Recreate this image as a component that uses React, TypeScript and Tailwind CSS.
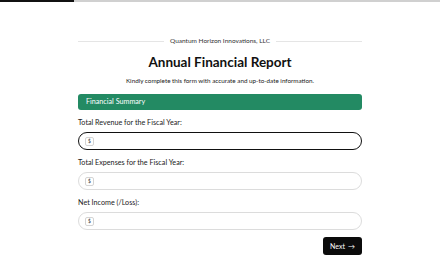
import React from "react";

function Field({ label, focused }: { label: string; focused?: boolean }) {
  return (
    <div className="flex flex-col">
      <label className="text-[7.2px] leading-[10px] text-[#222] mb-[4px]">{label}</label>
      <div
        className={
          "h-[18px] rounded-full flex items-center pl-[6px] bg-white " +
          (focused ? "border-[1.5px] border-[#111]" : "border border-[#dcdcdc]")
        }
      >
        <span className="w-[9px] h-[9px] border border-[#d4d4d4] rounded-[2px] text-[5px] leading-none flex items-center justify-center text-[#333]">
          $
        </span>
      </div>
    </div>
  );
}

export default function App() {
  return (
    <div className="w-[440px] h-[275px] bg-white overflow-hidden" style={{ fontFamily: "Lato, 'Noto Sans', sans-serif" }}>
      <div className="h-[2px] bg-[#d0d0d0] flex">
        <div className="w-[74px] bg-[#111]" />
      </div>
      <div className="w-[284px] mx-auto pt-[34px] flex flex-col">
        <div className="flex items-center gap-[6px]">
          <div className="flex-1 h-px bg-[#e5e5e5]" />
          <span className="text-[6.5px] leading-[10px] text-[#333]">Quantum Horizon Innovations, LLC</span>
          <div className="flex-1 h-px bg-[#e5e5e5]" />
        </div>
        <h1 className="text-center text-[13.5px] leading-[18px] font-bold text-[#111] mt-[7px]">Annual Financial Report</h1>
        <p className="text-center text-[6.3px] leading-[10px] text-[#222] mt-[5px]">
          Kindly complete this form with accurate and up-to-date information.
        </p>
        <div className="mt-[8px] h-[16px] rounded-[3px] bg-[#238a63] flex items-center px-[8px] text-[7.2px] text-white">
          Financial Summary
        </div>
        <div className="mt-[8px] flex flex-col gap-[8px]">
          <Field label="Total Revenue for the Fiscal Year:" focused />
          <Field label="Total Expenses for the Fiscal Year:" />
          <Field label="Net Income (/Loss):" />
        </div>
        <div className="flex justify-end mt-[7px]">
          <button className="h-[18px] px-[7px] rounded-[3px] bg-[#0b0b0b] text-white text-[7px] flex items-center gap-[3px]">
            Next <span className="text-[7px]">→</span>
          </button>
        </div>
      </div>
    </div>
  );
}
